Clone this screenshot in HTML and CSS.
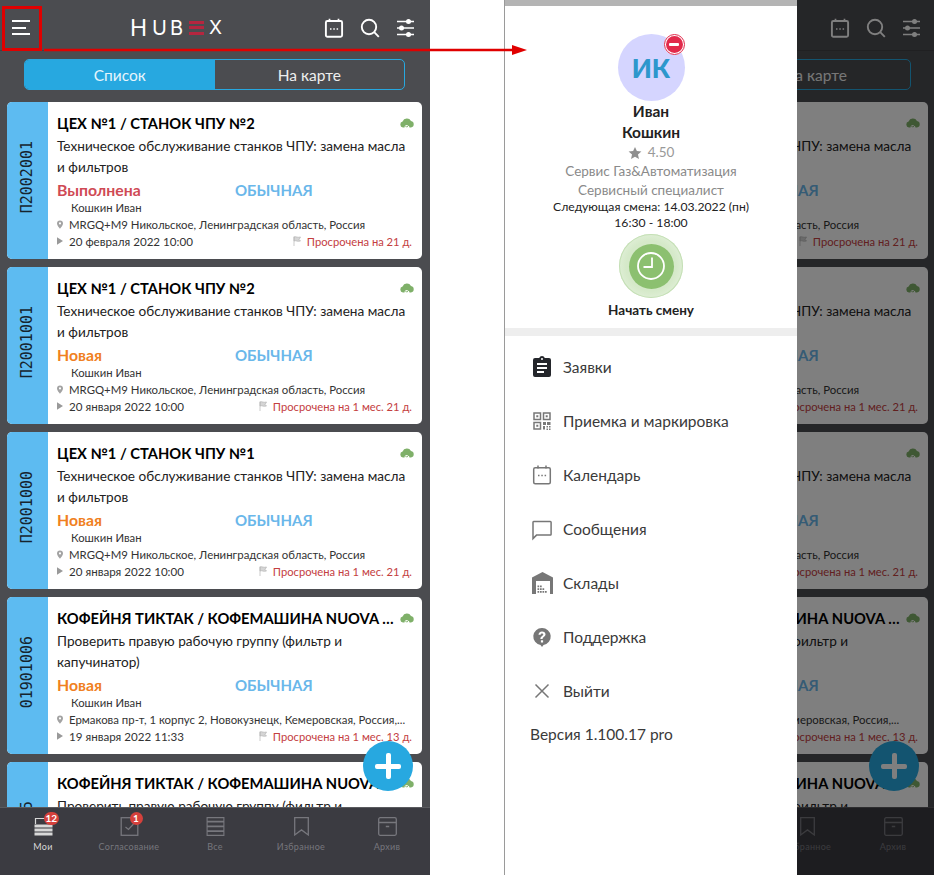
FILE: index.html
```html
<!DOCTYPE html>
<html lang="ru">
<head>
<meta charset="utf-8">
<title>HubEx</title>
<link rel="stylesheet" href="styles.css">
</head>
<body>
<svg class="sprite" aria-hidden="true">
  <symbol id="i-cal" viewBox="0 0 20 20"><rect x="1.900" y="3" width="16.200" height="15.800" rx="1.500" fill="none" stroke="currentColor" stroke-width="1.900"/><path d="M5.500 .8v3M14.500 .8v3" stroke="currentColor" stroke-width="1.700"/><path d="M6 11h1.500M9.300 11h1.500M12.600 11h1.500" stroke="currentColor" stroke-width="1.400"/></symbol>
  <symbol id="i-search" viewBox="0 0 20 20"><circle cx="9" cy="9" r="7.200" fill="none" stroke="currentColor" stroke-width="1.900"/><path d="M14.200 14.200l4.600 4.600" stroke="currentColor" stroke-width="1.900"/></symbol>
  <symbol id="i-sliders" viewBox="0 0 20 20"><path d="M1 3.500h17M1 10h17M1 16.500h17" stroke="currentColor" stroke-width="1.400"/><circle cx="12.500" cy="3.500" r="2.500" fill="currentColor"/><circle cx="5.500" cy="10" r="2.500" fill="currentColor"/><circle cx="12.500" cy="16.500" r="2.500" fill="currentColor"/></symbol>
  <symbol id="i-cloud" viewBox="0 0 14 11"><path d="M3 10.500a3 3 0 0 1-.4-5.900A4.600 4.600 0 0 1 11 4a3.300 3.300 0 0 1 0 6.500h-1.500a2.500 2.500 0 0 0-5 0z" fill="#7fb069"/><path d="M5.500 9l1.200 1.200L8.800 8" fill="none" stroke="#7fb069" stroke-width="1"/></symbol>
  <symbol id="i-pin" viewBox="0 0 8 11"><path fill-rule="evenodd" d="M4 0a4 4 0 0 1 4 4c0 2.700-4 7-4 7S0 6.700 0 4a4 4 0 0 1 4-4zm0 2.600a1.400 1.400 0 1 0 0 2.800 1.400 1.400 0 0 0 0-2.800z" fill="#a3a3a3"/></symbol>
  <symbol id="i-play" viewBox="0 0 7 9"><path d="M0 0l7 4.500L0 9z" fill="#999"/></symbol>
  <symbol id="i-flag" viewBox="0 0 8 10"><path d="M1 10V.5M1 1c2-1 3 1 6.500 0L6 3.500 7.500 5C4 6 3 4 1 5z" fill="#d5d5d5" stroke="#b5b5b5" stroke-width=".7"/></symbol>
  <symbol id="i-mine" viewBox="0 0 18 19"><path d="M1 7V1.500h14V7" fill="none" stroke="currentColor" stroke-width="1.200"/><path d="M0 7.500h18v3H0zM0 11.500h18v3H0zM0 15.500h18v3H0z" fill="currentColor"/></symbol>
  <symbol id="i-check" viewBox="0 0 18 19"><rect x=".7" y=".7" width="16.600" height="17.600" fill="none" stroke="currentColor" stroke-width="1.300"/><path d="M5 10l3 2.500L13 7" fill="none" stroke="currentColor" stroke-width="1.200"/></symbol>
  <symbol id="i-all" viewBox="0 0 18 19"><path d="M.6.600h16.800v3.600H.6zM.6 5h16.800v4H.6zM.6 9.800h16.800v4H.6zM.6 14.400h16.800v4H.6z" fill="none" stroke="currentColor" stroke-width="1.100"/></symbol>
  <symbol id="i-mark" viewBox="0 0 15 19"><path d="M.7.700h13.600v17.200l-6.800-5-6.800 5z" fill="none" stroke="currentColor" stroke-width="1.300"/></symbol>
  <symbol id="i-arch" viewBox="0 0 19 19"><rect x=".7" y=".7" width="17.600" height="17.600" rx="1.500" fill="none" stroke="currentColor" stroke-width="1.300"/><path d="M.7 5.500h17.600M7.800 9.500h3.400" stroke="currentColor" stroke-width="1.300"/></symbol>
</svg>

<main class="shots">
  <section class="phone">
    <header class="top">
      <button class="burger" aria-label="Меню"><span></span><span class="short"></span><span></span></button>
      <div class="logo"><span class="logo-h">H</span><span class="logo-u">U</span><span class="logo-b">B</span><span class="logo-e"><i></i><i></i><i></i></span><span class="logo-x">X</span></div>
      <div class="actions">
        <svg class="act act-cal"><use href="#i-cal"/></svg>
        <svg class="act act-search"><use href="#i-search"/></svg>
        <svg class="act act-sliders"><use href="#i-sliders"/></svg>
      </div>
    </header>
    <div class="seg"><div class="seg-item on">Список</div><div class="seg-item">На карте</div></div>
    <div class="list">
      <article class="card"><div class="card-id"><span>П2002001</span></div><div class="card-body">
        <div class="title-row"><h2>ЦЕХ №1 / СТАНОК ЧПУ №2</h2><svg class="cloud"><use href="#i-cloud"/></svg></div>
        <p class="desc">Техническое обслуживание станков ЧПУ: замена масла и фильтров</p>
        <div class="status-row"><span class="status done">Выполнена</span><span class="prio">ОБЫЧНАЯ</span></div>
        <div class="person">Кошкин Иван</div>
        <div class="addr"><svg class="pin"><use href="#i-pin"/></svg><span>MRGQ+M9 Никольское, Ленинградская область, Россия</span></div>
        <div class="date-row"><svg class="play"><use href="#i-play"/></svg><span>20 февраля 2022 10:00</span><span class="late"><svg class="flag"><use href="#i-flag"/></svg>Просрочена на 21 д.</span></div>
      </div></article>
      <article class="card"><div class="card-id"><span>П2001001</span></div><div class="card-body">
        <div class="title-row"><h2>ЦЕХ №1 / СТАНОК ЧПУ №2</h2><svg class="cloud"><use href="#i-cloud"/></svg></div>
        <p class="desc">Техническое обслуживание станков ЧПУ: замена масла и фильтров</p>
        <div class="status-row"><span class="status new">Новая</span><span class="prio">ОБЫЧНАЯ</span></div>
        <div class="person">Кошкин Иван</div>
        <div class="addr"><svg class="pin"><use href="#i-pin"/></svg><span>MRGQ+M9 Никольское, Ленинградская область, Россия</span></div>
        <div class="date-row"><svg class="play"><use href="#i-play"/></svg><span>20 января 2022 10:00</span><span class="late"><svg class="flag"><use href="#i-flag"/></svg>Просрочена на 1 мес. 21 д.</span></div>
      </div></article>
      <article class="card"><div class="card-id"><span>П2001000</span></div><div class="card-body">
        <div class="title-row"><h2>ЦЕХ №1 / СТАНОК ЧПУ №1</h2><svg class="cloud"><use href="#i-cloud"/></svg></div>
        <p class="desc">Техническое обслуживание станков ЧПУ: замена масла и фильтров</p>
        <div class="status-row"><span class="status new">Новая</span><span class="prio">ОБЫЧНАЯ</span></div>
        <div class="person">Кошкин Иван</div>
        <div class="addr"><svg class="pin"><use href="#i-pin"/></svg><span>MRGQ+M9 Никольское, Ленинградская область, Россия</span></div>
        <div class="date-row"><svg class="play"><use href="#i-play"/></svg><span>20 января 2022 10:00</span><span class="late"><svg class="flag"><use href="#i-flag"/></svg>Просрочена на 1 мес. 21 д.</span></div>
      </div></article>
      <article class="card"><div class="card-id"><span>01901006</span></div><div class="card-body">
        <div class="title-row"><h2>КОФЕЙНЯ ТИКТАК / КОФЕМАШИНА NUOVA SIMONELLI</h2><svg class="cloud"><use href="#i-cloud"/></svg></div>
        <p class="desc">Проверить правую рабочую группу (фильтр и капучинатор)</p>
        <div class="status-row"><span class="status new">Новая</span><span class="prio">ОБЫЧНАЯ</span></div>
        <div class="person">Кошкин Иван</div>
        <div class="addr"><svg class="pin"><use href="#i-pin"/></svg><span>Ермакова пр-т, 1 корпус 2, Новокузнецк, Кемеровская, Россия,...</span></div>
        <div class="date-row"><svg class="play"><use href="#i-play"/></svg><span>19 января 2022 11:33</span><span class="late"><svg class="flag"><use href="#i-flag"/></svg>Просрочена на 1 мес. 13 д.</span></div>
      </div></article>
      <article class="card"><div class="card-id"><span>01901005</span></div><div class="card-body">
        <div class="title-row"><h2>КОФЕЙНЯ ТИКТАК / КОФЕМАШИНА NUOVA SIMONELLI</h2><svg class="cloud"><use href="#i-cloud"/></svg></div>
        <p class="desc">Проверить правую рабочую группу (фильтр и капучинатор)</p>
      </div></article>
    </div>
    <button class="fab" aria-label="Создать"><span class="fab-h"></span><span class="fab-v"></span></button>
    <nav class="tabs">
      <div class="tab active"><span class="tab-icon"><svg class="ti"><use href="#i-mine"/></svg><b class="badge">12</b></span>Мои</div>
      <div class="tab"><span class="tab-icon"><svg class="ti"><use href="#i-check"/></svg><b class="badge">1</b></span>Согласование</div>
      <div class="tab"><span class="tab-icon"><svg class="ti"><use href="#i-all"/></svg></span>Все</div>
      <div class="tab"><span class="tab-icon"><svg class="ti"><use href="#i-mark"/></svg></span>Избранное</div>
      <div class="tab"><span class="tab-icon"><svg class="ti"><use href="#i-arch"/></svg></span>Архив</div>
    </nav>
  </section>

  <aside class="drawer">
    <div class="profile">
      <div class="avatar">ИК<span class="dnd"><i></i></span></div>
      <div class="name">Иван</div>
      <div class="name">Кошкин</div>
      <div class="rating"><svg class="star" viewBox="0 0 24 24"><path d="M12 1.500l3.200 7.200 7.800.800-5.900 5.200 1.700 7.700L12 18.400l-6.800 4 1.700-7.700L1 9.500l7.800-.800z" fill="#8f8f8f"/></svg>4.50</div>
      <div class="org">Сервис Газ&amp;Автоматизация</div>
      <div class="org">Сервисный специалист</div>
      <div class="next">Следующая смена: 14.03.2022 (пн)</div>
      <div class="next">16:30 - 18:00</div>
      <div class="shift"><div class="shift-in"><svg class="clock" viewBox="0 0 30 30"><circle cx="15" cy="15" r="13" fill="none" stroke="#fff" stroke-width="1.800"/><path d="M16 6.500V16H7.500" fill="none" stroke="#fff" stroke-width="1.800"/></svg></div></div>
      <div class="shift-label">Начать смену</div>
    </div>
    <ul class="menu">
      <li><svg class="mi" viewBox="0 0 24 24"><path d="M19 3h-4.200a3 3 0 0 0-5.600 0H5a2 2 0 0 0-2 2v15a2 2 0 0 0 2 2h14a2 2 0 0 0 2-2V5a2 2 0 0 0-2-2zm-7 0a1 1 0 1 1 0 2 1 1 0 0 1 0-2zm2 15H7v-2h7zm3-4H7v-2h10zm0-4H7V8h10z" fill="#24262b"/></svg>Заявки</li>
      <li><svg class="mi" viewBox="0 0 24 24"><path d="M4 4h6.500v6.500H4zM13.500 4H20v6.500h-6.500zM4 13.500h6.500V20H4z" fill="none" stroke="#777" stroke-width="1.500"/><path d="M6.300 6.300h2v2h-2zM15.700 6.300h2v2h-2zM6.300 15.700h2v2h-2z" fill="#777"/><path d="M13 13h3v3h-3zM17 13h3.500v3H17zM13 17h2v3.500h-2zM16.500 17h1.500v1.500h-1.500zM19 17h1.500v1.500H19zM16.500 19.500h1.500V21h-1.500zM19 19.500h1.500V21H19z" fill="#777"/></svg>Приемка и маркировка</li>
      <li><svg class="mi" viewBox="0 0 24 24"><rect x="3.700" y="4.700" width="16.600" height="16" rx="1.500" fill="none" stroke="#777" stroke-width="1.500"/><path d="M8 2.500v3M16 2.500v3" stroke="#777" stroke-width="1.500"/><path d="M8 12.500h1.500M11.300 12.500h1.500M14.600 12.500h1.500" stroke="#777" stroke-width="1.300"/></svg>Календарь</li>
      <li><svg class="mi" viewBox="0 0 24 24"><path d="M3.700 4.500h16.600a.8.800 0 0 1 .8.800v12a.8.800 0 0 1-.8.800H6.500l-3.500 3.500V5.300a.8.800 0 0 1 .7-.8z" fill="none" stroke="#777" stroke-width="1.500"/></svg>Сообщения</li>
      <li><svg class="mi" viewBox="0 0 24 24"><path fill-rule="evenodd" d="M2 23V6.500L12.500 1 23 6.500V23zM6 10v13h14V10z" fill="#777"/><path d="M7.500 14.500h1.700v1.700H7.500zM10 14.500h1.700v1.700H10zM7.500 17.300h1.700V19H7.500zM10 17.300h1.700V19H10zM12.500 17.300h1.700V19h-1.700zM7.500 20.100h1.700v1.700H7.500zM10 20.100h1.700v1.700H10zM12.500 20.100h1.700v1.700h-1.700zM15 20.100h1.700v1.700H15z" fill="#777"/></svg>Склады</li>
      <li><svg class="mi" viewBox="0 0 24 24"><path fill-rule="evenodd" d="M12 3a8.500 8.500 0 0 1 1.500 16.900L12 22l-1.500-2.100A8.500 8.500 0 0 1 12 3zm-1.100 12.300v2.100h2.200v-2.100zM12 6.500c-2 0-3.400 1.300-3.500 3.200h2.100c.1-.8.600-1.300 1.400-1.300s1.300.4 1.300 1.100c0 1.400-2.900 1.500-2.900 4.600h2.200c0-2.100 2.900-2.300 2.900-4.800 0-1.700-1.400-2.800-3.500-2.800z" fill="#777"/></svg>Поддержка</li>
      <li><svg class="mi" viewBox="0 0 24 24"><path d="M5.500 5.500l13 13M18.500 5.500l-13 13" stroke="#777" stroke-width="1.500"/></svg>Выйти</li>
    </ul>
    <div class="version">Версия 1.100.17 pro</div>
  </aside>

  <section class="peek">
    <div class="phone peek-phone">
      <header class="top">
        <div class="actions">
          <svg class="act act-cal"><use href="#i-cal"/></svg>
          <svg class="act act-search"><use href="#i-search"/></svg>
          <svg class="act act-sliders"><use href="#i-sliders"/></svg>
        </div>
      </header>
      <div class="seg"><div class="seg-item on"></div><div class="seg-item">На карте</div></div>
      <div class="list">
        <article class="card"><div class="card-body">
          <div class="title-row"><h2></h2><svg class="cloud"><use href="#i-cloud"/></svg></div>
          <p class="desc">Техническое обслуживание станков ЧПУ: замена масла и фильтров</p>
          <div class="status-row"><span class="status"></span><span class="prio">ОБЫЧНАЯ</span></div>
          <div class="person"></div>
          <div class="addr"><span>MRGQ+M9 Никольское, Ленинградская область, Россия</span></div>
          <div class="date-row"><span class="late"><svg class="flag"><use href="#i-flag"/></svg>Просрочена на 21 д.</span></div>
        </div></article>
        <article class="card"><div class="card-body">
          <div class="title-row"><h2></h2><svg class="cloud"><use href="#i-cloud"/></svg></div>
          <p class="desc">Техническое обслуживание станков ЧПУ: замена масла и фильтров</p>
          <div class="status-row"><span class="status"></span><span class="prio">ОБЫЧНАЯ</span></div>
          <div class="person"></div>
          <div class="addr"><span>MRGQ+M9 Никольское, Ленинградская область, Россия</span></div>
          <div class="date-row"><span class="late"><svg class="flag"><use href="#i-flag"/></svg>Просрочена на 1 мес. 21 д.</span></div>
        </div></article>
        <article class="card"><div class="card-body">
          <div class="title-row"><h2></h2><svg class="cloud"><use href="#i-cloud"/></svg></div>
          <p class="desc">Техническое обслуживание станков ЧПУ: замена масла и фильтров</p>
          <div class="status-row"><span class="status"></span><span class="prio">ОБЫЧНАЯ</span></div>
          <div class="person"></div>
          <div class="addr"><span>MRGQ+M9 Никольское, Ленинградская область, Россия</span></div>
          <div class="date-row"><span class="late"><svg class="flag"><use href="#i-flag"/></svg>Просрочена на 1 мес. 21 д.</span></div>
        </div></article>
        <article class="card"><div class="card-body">
          <div class="title-row"><h2>КОФЕЙНЯ ТИКТАК / КОФЕМАШИНА NUOVA SIMONELLI</h2><svg class="cloud"><use href="#i-cloud"/></svg></div>
          <p class="desc">Проверить правую рабочую группу (фильтр и капучинатор)</p>
          <div class="status-row"><span class="status"></span><span class="prio">ОБЫЧНАЯ</span></div>
          <div class="person"></div>
          <div class="addr"><span>Ермакова пр-т, 1 корпус 2, Новокузнецк, Кемеровская, Россия,...</span></div>
          <div class="date-row"><span class="late"><svg class="flag"><use href="#i-flag"/></svg>Просрочена на 1 мес. 13 д.</span></div>
        </div></article>
        <article class="card"><div class="card-body">
          <div class="title-row"><h2>КОФЕЙНЯ ТИКТАК / КОФЕМАШИНА NUOVA SIMONELLI</h2><svg class="cloud"><use href="#i-cloud"/></svg></div>
          <p class="desc">Проверить правую рабочую группу (фильтр и капучинатор)</p>
        </div></article>
      </div>
      <button class="fab" aria-label="Создать"><span class="fab-h"></span><span class="fab-v"></span></button>
      <nav class="tabs">
        <div class="tab"></div><div class="tab"></div><div class="tab"></div>
        <div class="tab"><span class="tab-icon"><svg class="ti"><use href="#i-mark"/></svg></span>Избранное</div>
        <div class="tab"><span class="tab-icon"><svg class="ti"><use href="#i-arch"/></svg></span>Архив</div>
      </nav>
    </div>
    <div class="scrim"></div>
  </section>
</main>

<svg class="callout" viewBox="0 0 934 875" aria-hidden="true">
  <rect x="3.500" y="7.500" width="37" height="42" fill="none" stroke="#e00000" stroke-width="3"/>
  <path d="M44 50H514" stroke="#e00000" stroke-width="2.500"/>
  <path d="M512 45l15 5-15 5z" fill="#e00000"/>
</svg>
</body>
</html>
```
FILE: styles.css
```css
* { box-sizing: border-box; }
html, body { margin: 0; height: 875px; overflow: hidden; background: #fff; }
body { position: relative; width: 934px; font-family: "Lato", "Noto Sans", sans-serif; color: #222; }
.sprite { position: absolute; width: 0; height: 0; }
.callout { position: absolute; left: 0; top: 0; width: 934px; height: 875px; pointer-events: none; }

.shots { display: flex; width: 934px; height: 875px; }
.phone { position: relative; flex: 0 0 430px; width: 430px; min-width: 0; height: 875px; background: #4b4c50; display: flex; flex-direction: column; overflow: hidden; }

.top { flex: 0 0 51px; display: flex; align-items: center; padding: 5px 14px 0 12px; border-bottom: 1px solid #404145; color: #fff; }
.burger { flex: 0 0 18px; height: 15px; padding: 0; border: 0; background: none; display: flex; flex-direction: column; justify-content: space-between; }
.burger span { display: block; width: 18px; height: 2px; background: #fff; }
.burger .short { width: 14px; }
.logo { margin-left: 100px; display: flex; align-items: center; height: 20px; font-family: "Inter", sans-serif; font-weight: 400; color: #fff; line-height: 20px; }
.logo-h { font-size: 23px; }
.logo-u { font-size: 20px; margin-left: 5px; }
.logo-b { font-size: 20px; margin-left: 3px; }
.logo-e { display: flex; flex-direction: column; justify-content: space-between; width: 15px; height: 14px; margin: 0 5px 0 6px; }
.logo-e i { display: block; height: 3px; background: #b5263f; }
.logo-x { font-size: 19px; }
.actions { margin-left: auto; display: flex; align-items: center; gap: 16px; }
.act { width: 20px; height: 20px; color: #fff; display: block; }

.seg { flex: 0 0 31px; margin: 8px 25px 12px 24px; display: flex; border: 1px solid #27a8e0; border-radius: 5px; overflow: hidden; }
.seg-item { flex: 1; display: flex; align-items: center; justify-content: center; color: #eee; font-size: 15.500px; }
.seg-item.on { background: #27a8e0; color: #e6f5fc; }

.list { flex: 1; min-height: 0; overflow: hidden; padding: 0 8px 0 7px; display: flex; flex-direction: column; gap: 8px; }
.card { flex: 0 0 157px; display: flex; background: #fff; border-radius: 5px; overflow: hidden; }
.card-id { flex: 0 0 41px; background: #5dbbf1; display: flex; align-items: center; justify-content: center; padding-bottom: 6px; }
.card-id span { writing-mode: vertical-rl; transform: rotate(180deg); font: 15px/1 "DejaVu Sans Mono", monospace; color: #16242e; }
.card-body { flex: 1; min-width: 0; padding: 11px 8px 0 9px; }
.peek-phone .card-body { padding-left: 50px; }
.title-row { display: flex; align-items: center; height: 20px; }
.title-row h2 { flex: 1; min-width: 0; margin: 0; font-size: 14.700px; font-weight: 700; color: #000; white-space: nowrap; overflow: hidden; text-overflow: ellipsis; line-height: 20px; }
.cloud { flex: 0 0 14px; width: 14px; height: 11px; margin-left: 1px; margin-top: -2px; }
.desc { margin: 3px 0 1px; font-size: 13.600px; line-height: 21px; color: #222; height: 42px; padding-right: 6px; }
.status-row { display: flex; height: 21px; align-items: center; font-size: 15px; font-weight: 700; }
.status { flex: 0 0 178px; font-size: 15.800px; }
.done { color: #cf4a55; }
.new { color: #f08021; }
.prio { color: #6ab7ea; }
.person { padding-left: 14px; font-size: 11.300px; line-height: 16px; height: 16px; color: #333; }
.addr { display: flex; align-items: center; height: 16px; font-size: 11.400px; color: #333; }
.addr span { white-space: nowrap; overflow: hidden; text-overflow: ellipsis; }
.pin { flex: 0 0 6px; width: 6px; height: 9px; margin-right: 6px; }
.date-row { display: flex; align-items: center; height: 18px; font-size: 11.600px; color: #333; padding-right: 2px; }
.play { flex: 0 0 6px; width: 6px; height: 8px; margin-right: 6px; }
.late { margin-left: auto; display: flex; align-items: center; color: #c4403f; font-size: 11.200px; }
.flag { width: 8px; height: 10px; margin-right: 6px; }

.fab { position: absolute; left: 363px; top: 741px; width: 50px; height: 50px; border: 0; border-radius: 50%; background: #27a8e0; padding: 0; }
.fab-h, .fab-v { position: absolute; background: #fff; border-radius: 2px; }
.fab-h { left: 12px; top: 22.500px; width: 26px; height: 5px; }
.fab-v { left: 22.500px; top: 12px; width: 5px; height: 26px; }

.tabs { flex: 0 0 68px; display: flex; background: #3b3b41; border-top: 1px solid #5a5b5f; padding-top: 9px; }
.tab { flex: 1; display: flex; flex-direction: column; align-items: center; font-size: 9px; letter-spacing: .3px; color: #77777d; line-height: 14px; }
.tab.active { color: #d8d8d8; }
.tab-icon { position: relative; height: 22px; margin-bottom: 1px; }
.ti { width: 19px; height: 19px; display: block; }
.badge { position: absolute; left: 10px; top: -5px; min-width: 13px; height: 13px; padding: 0 2px; border-radius: 7px; background: #d5413c; color: #fff; font-size: 10px; line-height: 13px; font-weight: 700; text-align: center; letter-spacing: 0; }

.peek { position: relative; flex: 0 0 137px; height: 875px; overflow: hidden; }
.peek-phone { margin-left: -291px; }
.scrim { position: absolute; inset: 0; background: rgba(0, 0, 0, .5); }

.drawer { flex: 0 0 293px; margin-left: 74px; height: 875px; background: #fff; border-left: 1px solid #9a9a9a; }
.drawer::before { content: ""; display: block; height: 6px; background: #b4b4b4; }
.profile { display: flex; flex-direction: column; align-items: center; padding-top: 28px; border-bottom: 8px solid #eeeeee; height: 330px; }
.avatar { position: relative; width: 67px; height: 67px; border-radius: 50%; background: #d5d5ff; color: #2d97cc; font-size: 26px; font-weight: 900; display: flex; align-items: center; justify-content: center; }
.dnd { position: absolute; left: 46px; top: 0; width: 21px; height: 21px; border-radius: 50%; background: #e22a4b; border: 2px solid #fff; outline: 1px solid #e22a4b; outline-offset: -1px; display: flex; align-items: center; justify-content: center; }
.dnd i { display: block; width: 10px; height: 3px; background: #fff; border-radius: 1px; }
.name { font-size: 15.500px; font-weight: 700; line-height: 21px; color: #222; }
.rating { display: flex; align-items: center; gap: 6px; font-size: 13.500px; line-height: 17px; color: #999; margin: 1px 0 1px; }
.star { width: 14px; height: 14px; display: block; }
.org { font-size: 13.500px; line-height: 19px; color: #8a8a8a; }
.next { font-size: 12.200px; line-height: 16px; color: #222; position: relative; top: -1px; }
.shift { margin-top: 2px; width: 64px; height: 64px; border-radius: 50%; background: radial-gradient(circle, #d5e9c9 55%, #eef7e9 100%); box-shadow: inset 0 0 0 1px #c4dfb5; display: flex; align-items: center; justify-content: center; }
.shift-in { width: 45px; height: 45px; border-radius: 50%; background: #8cc070; display: flex; align-items: center; justify-content: center; }
.clock { width: 30px; height: 30px; display: block; }
.shift-label { margin-top: 4px; font-size: 13.500px; font-weight: 700; line-height: 16px; color: #222; }
.menu { list-style: none; margin: 0; padding: 4.200px 0 0 25px; }
.menu li { display: flex; align-items: center; height: 54px; font-size: 15.500px; color: #3a3a3a; }
.mi { flex: 0 0 24px; width: 24px; height: 24px; margin-right: 9px; }
.version { margin: 6px 0 0 25px; font-size: 15.500px; line-height: 20px; color: #3a3a3a; }
```
